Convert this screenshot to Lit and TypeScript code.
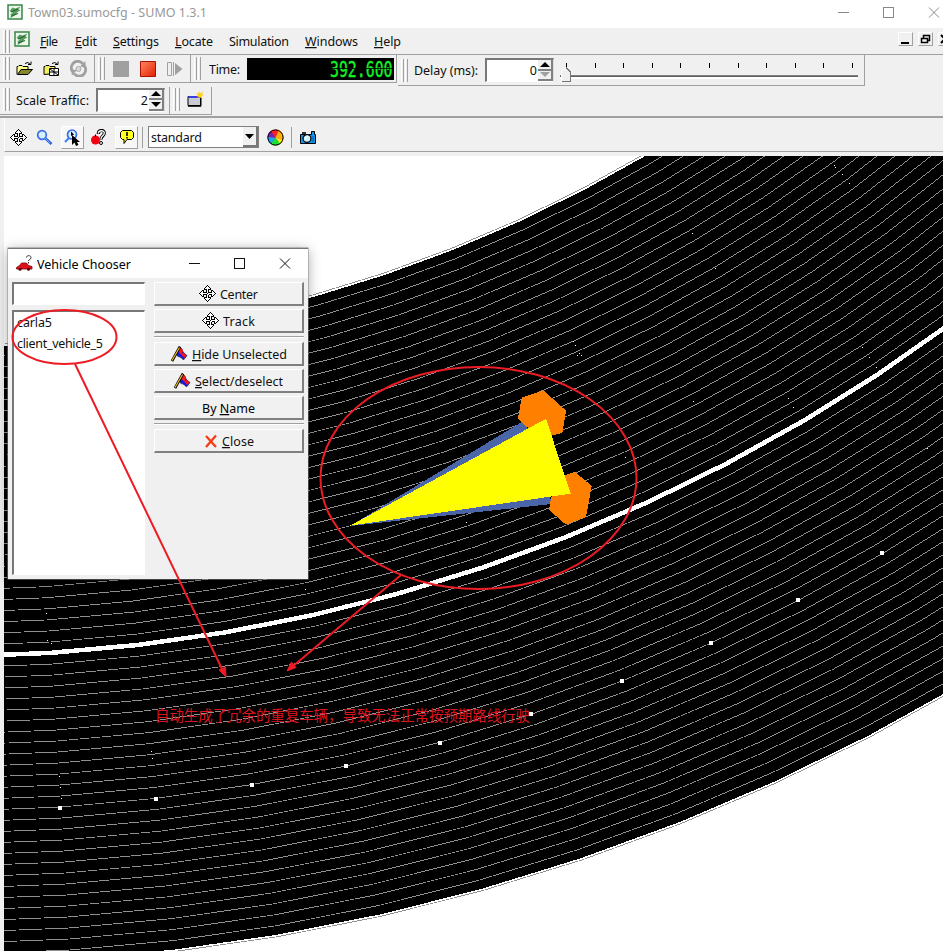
import { LitElement, html, svg, css } from "lit";
import { customElement } from "lit/decorators.js";

const CX = -60;
const CY = -1043.5;
const STEP = 2.983;
const FIRST = 3.71;
const LEFT = 4;
const TOP = 156;
const RIGHT = 943;
const BOTTOM = 951;

/** Height of a faceted ring with radius r at column x. */
function ringY(r: number, x: number): number {
  const point = (k: number) => {
    const a = ((FIRST + STEP * k) * Math.PI) / 180;
    return [CX + r * Math.sin(a), CY + r * Math.cos(a)];
  };
  let k = -1;
  while (k < 20 && point(k + 1)[0] < x) k++;
  const [x0, y0] = point(k);
  const [x1, y1] = point(k + 1);
  return y0 + ((y1 - y0) * (x - x0)) / (x1 - x0);
}

/** One-pixel runs of a thin lane divider. */
function dividerRuns(r: number): string {
  let d = "";
  let start = -1;
  let row = -1;
  const flush = (x: number) => {
    if (start >= 0) d += `M${start} ${row}h${x - start}v1h${start - x}z`;
    start = -1;
  };
  for (let x = LEFT; x < RIGHT; x++) {
    const y = ringY(r, x + 0.5);
    const slope = Math.abs(ringY(r, x + 1) - ringY(r, x));
    const t = 0.88 * Math.sqrt(1 + slope * slope);
    const py = Math.floor(y);
    const hit = Math.abs(py + 0.5 - y) <= t / 2 && py >= TOP && py < BOTTOM;
    if (!hit) flush(x);
    else if (py !== row || start < 0) {
      flush(x);
      start = x;
      row = py;
    }
  }
  flush(RIGHT);
  return d;
}

function ringPoints(r: number): string[] {
  const pts: string[] = [];
  for (let x = LEFT - 2; x <= RIGHT + 4; x += 4) pts.push(`${x},${ringY(r, x).toFixed(1)}`);
  return pts;
}

const dividers = Array.from({ length: 57 }, (_, i) => i - 28)
  .filter((k) => k !== 0)
  .map((k) => dividerRuns(1700.2 + k * (k < 0 ? 11.1 : 11.02)))
  .join("");
const road = [...ringPoints(1391.5), ...ringPoints(2006.8).reverse()].join(" ");
const centreLine = ringPoints(1700).join(" ");

const markers = [[60, 808], [156, 799], [252, 785], [346, 766], [440, 743], [531, 714], [622, 681], [711, 643], [798, 600], [882, 553]];
const specks = [[46, 613], [47, 640], [51, 643], [59, 776], [60, 787], [61, 798], [151, 751], [152, 758], [305, 589], [834, 165], [835, 167], [842, 174], [849, 183], [692, 233], [715, 268], [862, 347], [869, 357], [876, 367], [788, 398], [793, 407], [693, 401], [927, 448], [466, 522], [625, 457], [577, 355], [579, 353], [581, 355], [573, 341], [575, 345]];

const ARROW = "M7.5 7.5V4.500H5.500V3.500L8.500 .5L11.500 3.500V4.500H9.500V7.500";
const icons = {
  logo: html`<svg width="16" height="16"><path d="M1 1h14v14H1z" fill="#eef7ee" stroke="#3a8744" stroke-width="1.500"/><path d="M2.500 7l3-3.500 3 1 5-2-2 3 2 1-3 1.500-2 3-4 2.500H3l2-2.500-2-.5 3-2z" fill="#5a9f61"/><path d="M4 12l7-2.500M4 8l7-3" stroke="#23642c" stroke-width="1.200" fill="none"/></svg>`,
  move: html`<svg width="17" height="17" shape-rendering="crispEdges"><g fill="#fff" stroke="#000"><path d=${ARROW}/><path d=${ARROW} transform="rotate(90 8.500 8.500)"/><path d=${ARROW} transform="rotate(180 8.500 8.500)"/><path d=${ARROW} transform="rotate(270 8.500 8.500)"/></g><path d="M8 8h1v1H8z"/></svg>`,
  open: html`<svg width="17" height="17"><path d="M1 14.5V6.5h1l1-1h3l1 1h5v3" fill="#ffff8c" stroke="#000"/><path d="M1.500 14.500L5 9.500h11.500l-4.500 5z" fill="#85852c" stroke="#000"/><path d="M9 3.500q3-2.500 5.500 1M12 4.500h3v-3" fill="none" stroke="#000"/></svg>`,
  openNet: html`<svg width="17" height="17"><path d="M1 14.500V6.500h1l1-1h3l1 1h5v7z" fill="#f0f060" stroke="#000"/><path d="M6.500 8.500h9v7h-9zM11 8.500v7M6.500 12h9M7 9l8 6" fill="#fff" stroke="#000"/><path d="M9 3.500q3-2.500 5.500 1M12 4.500h3v-3" fill="none" stroke="#000"/></svg>`,
  reload: html`<svg width="17" height="17"><path d="M2.500 11.500A6.300 6.300 0 0 1 13 4" fill="none" stroke="#a0a0a0" stroke-width="2.800"/><path d="M14.500 6A6.300 6.300 0 0 1 4 13.500" fill="none" stroke="#a0a0a0" stroke-width="2.800"/><path d="M10 6.500l5.500 1V1zM1 9.500l6 .5-5 5.500z" fill="#a0a0a0"/><circle cx="8.500" cy="9" r="2.500" fill="#d8d8d8" stroke="#a8a8a8"/></svg>`,
  step: html`<svg width="16" height="16"><path d="M.5 1.500h4v13h-4z" fill="none" stroke="#a0a0a0"/><path d="M6 1h1v14H6zM8 2l7.500 6L8 14z" fill="#a0a0a0"/></svg>`,
  window: html`<svg width="17" height="17"><path d="M1 5.500h12.500v9H1z" fill="#cbcbd6" stroke="#000"/><path d="M1.500 5h11v2h-11z" fill="#3d3de0"/><path d="M1 15.300h13V6" stroke="#000" fill="none"/><path d="M9 2l2 1 1-3 1 2.500L16 0l-1 3 2 1-3 1 2 3-4-2-2 1 1-2z" fill="#ffcf10"/></svg>`,
  zoom: html`<svg width="17" height="17"><circle cx="6" cy="6" r="4.300" fill="#d4efff" stroke="#3d6be8" stroke-width="1.700"/><path d="M9.500 9.500l6 5.500" stroke="#2b62da" stroke-width="2.600"/><path d="M9 9l5 5" stroke="#67b5ff" stroke-width="1"/></svg>`,
  zoomStyle: html`<svg width="17" height="17"><circle cx="8" cy="5.500" r="4.500" fill="#d4efff" stroke="#3d6be8" stroke-width="1.700"/><path d="M5 9l-4 4" stroke="#3d83f0" stroke-width="2.200"/><path d="M7 2.500v4.500l3-1.500z"/><path d="M8 6v10l2.500-2.500 1.500 3.500 2.500-1-1.500-3H16z" fill="#000"/></svg>`,
  ask: html`<svg width="17" height="17"><path d="M8.300 5C8.300 .5 14.300 .5 14.300 4S11 6.500 11 10.500" fill="none" stroke="#000" stroke-width="3.200"/><path d="M8.300 4.500C8.500 1 14.300 .8 14.300 4S11 6.500 11 10" fill="none" stroke="#fff" stroke-width="1.300"/><circle cx="5.500" cy="11" r="4.500" fill="#f00010"/><path d="M5.500 8V5.500" stroke="#000"/><circle cx="11" cy="14" r="1.500" fill="#fff" stroke="#000"/></svg>`,
  bubble: html`<svg width="16" height="17"><path d="M3.500 1.500h9l2 2v5l-2 2H8l-3 4v-4H3.500l-2-2v-5z" fill="#ffff20" stroke="#000"/><path d="M7.200 3h1.600v4H7.200zM7.200 8h1.600v1.500H7.200z"/></svg>`,
  wheel: html`<svg width="17" height="17"><circle cx="8.500" cy="8.500" r="8" fill="#f22"/><path d="M8.500 8.500L12 1a8 8 0 0 1 4 10z" fill="#ffb010"/><path d="M8.500 8.500L16 11a8 8 0 0 1-3 4z" fill="#f5ef20"/><path d="M8.500 8.500L13 15a8 8 0 0 1-9 0z" fill="#16e62c"/><path d="M8.500 8.500L4 15a8 8 0 0 1-3.500-7z" fill="#12a8f8"/><path d="M8.500 8.500L.500 8A8 8 0 0 1 4 2z" fill="#7620b8"/><circle cx="8.500" cy="8.500" r="7.600" fill="none" stroke="#000"/></svg>`,
  camera: html`<svg width="17" height="15"><path d="M.5 4.500h11v-3h3v3h1v9H.500z" fill="#1194ea" stroke="#000"/><path d="M2 3h4" stroke="#000" stroke-width="1.600"/><circle cx="7" cy="8.500" r="3.900" fill="#c8f0ff" stroke="#000" stroke-width="1.200"/><path d="M5 9l3-3" stroke="#fff" stroke-width="1.500"/><path d="M13 6v6" stroke="#075a9c"/></svg>`,
  car: html`<svg width="17" height="17"><path d="M.5 12.500l3-2 2-2.500h5l2 2.500 3.500 1v2.500H.500z" fill="#e01018" stroke="#7c060b" stroke-width=".8"/><circle cx="4" cy="14.300" r="1.500" fill="#500"/><circle cx="12.500" cy="14.300" r="1.500" fill="#500"/><path d="M10.500 2.500C10.500 0 15 0 15 2.500S12.500 4 12.500 6M12.500 7v1.500" fill="none" stroke="#333"/></svg>`,
  flag: html`<svg width="17" height="16"><path d="M8 1.500c2 0 3 1 3.500 3s2 3 4.500 5l-3 4c-2 0-2.500-2-4-2.500S6 11 6 8z" fill="#1515f0" stroke="#222" stroke-width=".7"/><path d="M9 1.500c2 .5 2.500 2 3 3.500l-1.500 4L7.500 6zM12 6.500l3.500 3-2 2.500-3-3z" fill="#f01818"/><path d="M9 .5L1 15" stroke="#000" stroke-width="2.600"/><path d="M8.500 1.500L1 14.500" stroke="#f0c020" stroke-width="1.200"/></svg>`,
  cross: html`<svg width="14" height="14"><path d="M2 2l10 11M12 1.500L2 13" stroke="#f23c14" stroke-width="2.300"/></svg>`,
};

const grip = html`<i class="grip"></i>`;
const spinner = (low: boolean) => html`<span class="spin"><b><svg width="10" height="5"><path d="M0 5l5-5 5 5z"/></svg></b><b><svg width="10" height="5"><path d="M0 0h10L5 5z" fill=${low ? "#a0a0a0" : "#000"}/></svg></b></span>`;

@customElement("app-root")
export class AppRoot extends LitElement {
  static styles = css`
    :host { display: block; position: relative; width: 943px; height: 951px; overflow: hidden; background: #f0f0f0; color: #111; font: 12.5px/18px "Noto Sans", "Open Sans", sans-serif; }
    * { box-sizing: border-box; }
    svg { display: block; flex: none; }
    .title { height: 28px; background: #fff; display: flex; align-items: center; padding: 0 3px 4px 7px; color: #999; }
    .title .name { margin-left: 5px; flex: 1; }
    .menu { height: 27px; display: flex; align-items: center; border-bottom: 1px solid #a0a0a0; position: relative; }
    .menu .logo { margin: -4px 10px 0 4px; }
    .menu .item { flex: none; white-space: nowrap; }
    .mdi { margin-left: auto; display: flex; gap: 5px; width: 45px; margin-top: -5px; overflow: hidden; }
    .mdi b { flex: none; width: 15px; height: 14px; border: 1px solid #fff; border-right-color: #a0a0a0; border-bottom-color: #a0a0a0; }
    .grip { flex: none; width: 7px; height: 23px; margin-left: 3px; background: linear-gradient(90deg, #fff 1px, #eee 1px 2px, #a0a0a0 2px 3px, #f0f0f0 3px 4px, #fff 4px 5px, #eee 5px 6px, #a0a0a0 6px); }
    .row { display: flex; align-items: flex-start; }
    .row.one { height: 32px; }
    .row.two { height: 31px; border-bottom: 2px solid #a0a0a0; }
    .row.two .group { padding-bottom: 2px; }
    .group { flex: none; display: flex; align-items: center; height: 28px; border-right: 1px solid #a0a0a0; border-bottom: 1px solid #a0a0a0; margin-right: 1px; }
    .lcd { background: #000; margin-left: auto; margin-right: 2px; }
    .field { display: flex; justify-content: flex-end; background: #fff; border: 2px solid #777; border-right: 1px solid #ddd; border-bottom: 1px solid #fff; height: 24px; line-height: 22px; }
    .spin { width: 15px; display: flex; flex-direction: column; margin-left: 1px; }
    .spin b { flex: 1; display: flex; align-items: center; justify-content: center; background: #f0f0f0; border-right: 2px solid #808080; border-bottom: 2px solid #808080; }
    .view { height: 34px; margin-left: 4px; display: flex; align-items: center; border-bottom: 1px solid #a0a0a0; padding: 5px 0 0 5px; border-left: 1px solid #fff; }
    .tool { width: 23px; height: 23px; display: flex; align-items: center; justify-content: center; }
    .tool.on { border: 1px solid #fff; border-right-color: #a0a0a0; border-bottom-color: #a0a0a0; background: #f7f7f7; }
    .combo { width: 111px; height: 22px; background: #fff; border: 1px solid #808080; padding-left: 2px; display: flex; align-items: center; justify-content: space-between; margin-left: 5px; }
    .combo b { width: 15px; height: 20px; background: #f0f0f0; border-right: 2px solid #777; border-bottom: 2px solid #777; display: flex; align-items: center; justify-content: center; }
    .bar { width: 1px; height: 21px; background: #a0a0a0; }
    .canvas { margin: 4px 0 0 4px; }
    .dialog { position: absolute; left: 8px; top: 248px; width: 300px; height: 331px; background: #f0f0f0; border-top: 1px solid #777; box-shadow: 0 0 0 .5px #888, 0 2px 12px rgba(0,0,0,.35); }
    .caption { height: 29px; background: #fff; display: flex; align-items: center; padding: 0 17px 0 8px; color: #000; }
    .caption .name { flex: 1; margin-left: 4px; }
    .body { display: flex; justify-content: space-between; padding: 4px; height: 301px; }
    .left { width: 133px; display: flex; flex-direction: column; gap: 5px; }
    .well { background: #fff; border: 2px solid #777; border-right: 1px solid #fff; border-bottom: 1px solid #fff; }
    .search { height: 23px; }
    .list { height: 265px; padding: 1px 3px; line-height: 21px; }
    .right { width: 150px; }
    .btn { height: 24px; margin-bottom: 3px; display: flex; align-items: center; justify-content: center; gap: 4px; border: 1px solid #fff; border-right: 2px solid #808080; border-bottom: 2px solid #808080; background: #f1f1f1; }
    .sep { height: 2px; background: #a0a0a0; border-bottom: 1px solid #fff; margin: 3px 0 4px; }
    .notes { position: absolute; left: 0; top: 0; }
    .note { font-family: "Noto Sans CJK SC", sans-serif; font-weight: 400; }
    .digits { font-family: "DejaVu Sans Mono", monospace; }
  `;

  private button(icon: unknown, label: unknown) {
    return html`<div class="btn">${icon}<span>${label}</span></div>`;
  }

  private label(text: string, width: number) {
    return html`<svg width=${width} height="18"><text x="0" y="14" textLength=${width} fill="currentColor">${text}</text></svg>`;
  }

  private menuItem(text: string, width: number, gap: number, plain = false) {
    return html`<svg class="item" width=${width + gap} height="20"><text x="0" y="15" textLength=${width} fill="currentColor">${plain ? text : svg`<tspan text-decoration="underline">${text[0]}</tspan>${text.slice(1)}`}</text></svg>`;
  }

  render() {
    const frame = (c: string) => svg`<g fill="none" stroke=${c} shape-rendering="crispEdges"><path d="M0 8.500h11M45.500 3.500h10v10h-10z"/></g><path d="M91 3.500l10 10M101 3.500l-10 10" stroke=${c}/>`;
    return html`
      <div class="title">${icons.logo}<span class="name">${this.label("Town03.sumocfg - SUMO 1.3.1", 179)}</span><svg width="102" height="17">${frame("#888")}</svg></div>
      <div class="menu">${grip}<span class="logo">${icons.logo}</span>
        ${this.menuItem("File", 18, 17)}${this.menuItem("Edit", 22, 16)}${this.menuItem("Settings", 46, 16)}${this.menuItem("Locate", 38, 16)}${this.menuItem("Simulation", 60, 16, true)}${this.menuItem("Windows", 53, 16)}${this.menuItem("Help", 27, 0)}
        <span class="mdi"><b><svg width="13" height="12"><path d="M2 9h8v2H2z"/></svg></b><b><svg width="13" height="12"><path d="M4.500 5V2.500h6v5H8M2.500 5.500h6v4h-6z" fill="none" stroke="#000" stroke-width="1.500"/></svg></b><b><svg width="13" height="12"><path d="M2 2l8 8M10 2l-8 8" stroke="#000" stroke-width="2"/></svg></b></span>
      </div>
      <div class="row one">
        <div class="group" style="width:95px;margin-right:0">${grip}<svg width="6" height="1"></svg>${icons.open}<svg width="10" height="1"></svg>${icons.openNet}<svg width="10" height="1"></svg>${icons.reload}</div>
        <div class="group" style="width:96px;margin-right:0">${grip}<svg width="8" height="1"></svg><svg width="16" height="16"><path d="M0 0h16v16H0z" fill="#a0a0a0"/></svg><svg width="11" height="1"></svg><svg width="16" height="16"><defs><linearGradient id="stop" x2="1" y2="1"><stop stop-color="#ff8a62"/><stop offset="1" stop-color="#e41d00"/></linearGradient></defs><path d="M.5 .5h15v15H.500z" fill="url(#stop)" stroke="#a81200"/></svg><svg width="11" height="1"></svg>${icons.step}</div>
        <div class="group" style="width:206px">${grip}<svg width="8" height="1"></svg>${this.label("Time:", 31)}
          <svg class="lcd" width="147" height="22"><text class="digits" transform="translate(83 18.500) scale(.675 1)" font-size="22" fill="#12f524" stroke="#12f524" stroke-width=".4">392.600</text><path d="M83 10.500h63" stroke="#000" stroke-width=".8"/></svg></div>
        <div class="group" style="width:467px;height:31px">${grip}<svg width="6" height="1"></svg>${this.label("Delay (ms):", 64)}
          <span class="field" style="width:69px;margin-left:7px">0${spinner(true)}</span>
          <svg width="306" height="28" shape-rendering="crispEdges"><path d=${Array.from({ length: 11 }, (_, i) => `M${Math.round(12 + i * 28.6)}.5 7v5`).join("")} stroke="#000"/><path d="M6 19.500h298" stroke="#808080" stroke-width="1"/><path d="M6 20.500h298" stroke="#606060"/><path d="M6 22h298" stroke="#fff" stroke-width="2"/><path d="M7.500 25.500v-10l4-4 5 4v10z" fill="#f0f0f0" stroke="#fff"/><path d="M8 25.500h8.500v-10l-4.500-4" fill="none" stroke="#777" stroke-width="1.500"/></svg></div>
      </div>
      <div class="row two">
        <div class="group" style="width:170px;margin-right:0">${grip}<svg width="6" height="1"></svg>${this.label("Scale Traffic:", 73)}<span class="field" style="width:69px;margin-left:7px">2${spinner(false)}</span></div>
        <div class="group" style="width:42px">${grip}<svg width="7" height="1"></svg>${icons.window}</div>
      </div>
      <div class="view">
        ${icons.move}<svg width="9" height="1"></svg>${icons.zoom}<svg width="8" height="1"></svg><span class="tool on">${icons.zoomStyle}</span><svg width="6" height="1"></svg>${icons.ask}<svg width="8" height="1"></svg><span class="tool on">${icons.bubble}</span><svg width="4" height="1"></svg><i class="bar"></i>
        <span class="combo">${this.label("standard", 51)}<b><svg width="9" height="5"><path d="M0 0h9L4.500 5z"/></svg></b></span><svg width="8" height="1"></svg>${icons.wheel}<svg width="7" height="1"></svg><i class="bar"></i><svg width="8" height="1"></svg>${icons.camera}
      </div>
      <svg class="canvas" width="939" height="795" viewBox="4 156 939 795" shape-rendering="crispEdges">
        <path d="M4 156h939v795H4z" fill="#fff"/>
        <polygon points=${road} fill="#000"/>
        <path d=${dividers} fill="#909090"/>
        <polyline points=${centreLine} fill="none" stroke="#fff" stroke-width="4.500"/>
        ${markers.map(([x, y]) => svg`<rect x=${x - 2} y=${y - 2} width="4" height="4" fill="#fff"/>`)}
        ${specks.map(([x, y]) => svg`<rect x=${x} y=${y} width="1" height="1" fill="#fff"/>`)}
        <polygon points="350,526 525,420 552,504" fill="#4a66a8"/>
        <polygon points="521.700,397.700 543.300,390.300 566,410.700 562.300,433 550,436 526.700,427 518,418" fill="#ff8000"/>
        <polygon points="565,475 575,472 591.700,486 586,517 566,524.700 549,510 551,498" fill="#ff8000"/>
        <polygon points="350,525.700 546,418.700 570.700,493.700" fill="#ff0"/>
      </svg>
      <div class="dialog">
        <div class="caption">${icons.car}<span class="name">${this.label("Vehicle Chooser", 94)}</span><svg width="102" height="17"><g fill="none" stroke="#111" shape-rendering="crispEdges"><path d="M0 8.500h11M45.500 3.500h10v10h-10z"/></g><path d="M91 3.500l10 10M101 3.500l-10 10" stroke="#111"/></svg></div>
        <div class="body">
          <div class="left"><div class="well search"></div><div class="well list">${this.label("carla5", 35)}<svg width="1" height="3"></svg>${this.label("client_vehicle_5", 86)}</div></div>
          <div class="right">
            ${this.button(icons.move, this.label("Center", 38))}${this.button(icons.move, this.label("Track", 32))}
            <div class="sep"></div>
            ${this.button(icons.flag, this.menuItem("Hide Unselected", 95, 0))}${this.button(icons.flag, this.menuItem("Select/deselect", 88, 0))}
            ${this.button("", html`<svg width="53" height="20"><text x="0" y="15" textLength="53">By <tspan text-decoration="underline">N</tspan>ame</text></svg>`)}
            <div class="sep"></div>
            ${this.button(icons.cross, this.menuItem("Close", 32, 0))}
          </div>
        </div>
      </div>
      <svg class="notes" width="943" height="951" fill="none" stroke="#ed1c24" stroke-width="2">
        <ellipse cx="478.500" cy="478" rx="158" ry="111"/>
        <ellipse cx="64.500" cy="337" rx="52" ry="27"/>
        <path d="M75 364L223 671M401 575L292 667"/>
        <path d="M226 677l-7-7 6.500-3zM287 671l4.500-9 4.500 5.500z" fill="#ed1c24" stroke-width="1"/>
        <text class="note" x="155" y="721" font-size="14.500" textLength="375" fill="#dc141e" stroke="none">自动生成了冗余的重复车辆，导致无法正常按预期路线行驶</text>
      </svg>`;
  }
}
